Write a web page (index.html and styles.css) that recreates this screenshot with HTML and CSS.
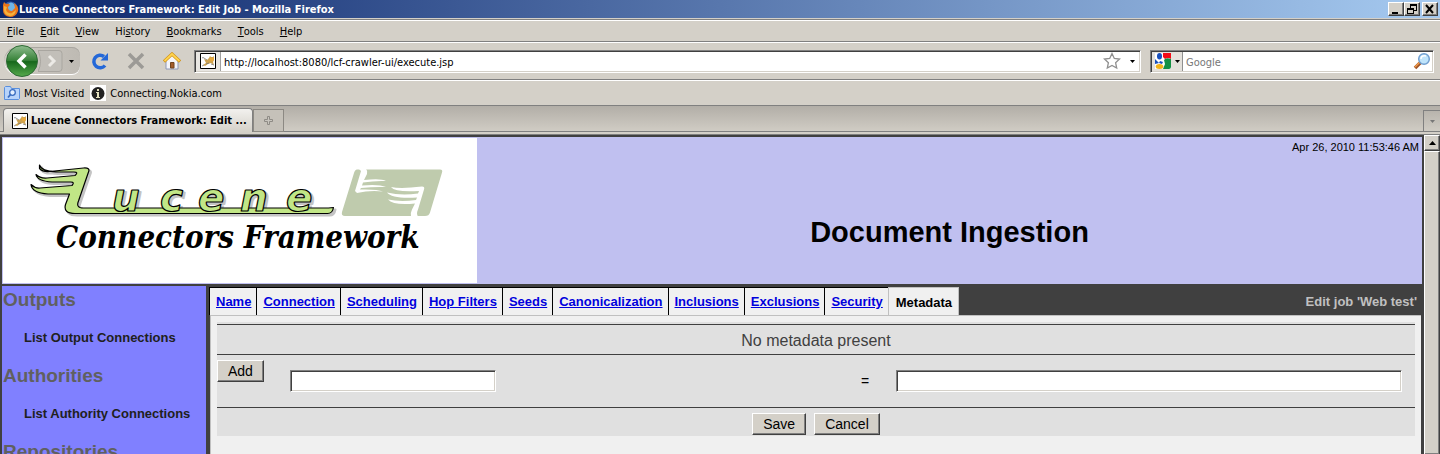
FILE: index.html
```html
<!DOCTYPE html>
<html lang="en">
<head>
<meta charset="utf-8">
<title>Lucene Connectors Framework: Edit Job</title>
<link rel="stylesheet" href="styles.css">
</head>
<body>
<svg class="defs" aria-hidden="true">
  <symbol id="cat" viewBox="0 0 16 16">
    <path d="M.5.5h15v15H.5z" fill="#fff" stroke="#000"/>
    <path d="M4 6l3 1 2-2 1-2 1 1h2l1-1v4l-1 2 1 3-3-2-3 1-3 2-2-1 3-2-1-2z" fill="#cda24f"/>
    <path d="M10 4l1 1h2l1-1v3l-2 1.500-2-1z" fill="#e8a93d"/>
    <path d="M2 5q1-1 2 0l3 2M2 13l2-1M6 11l3-1M11 11l3 1" fill="none" stroke="#777" stroke-width=".8"/>
  </symbol>
  <symbol id="caret" viewBox="0 0 5 3"><path d="M0 0h5L2.500 3z" fill="currentColor"/></symbol>
</svg>
<header class="browser">
  <div class="titlebar">
    <svg class="i17" viewBox="0 0 17 17"><circle cx="8.500" cy="8" r="7.500" fill="#315caa"/><path d="M6 3q3-3 6 0 2 2 1 5-1 3-4 3-4 0-4-4z" fill="#6fb4e8"/><path d="M1 4l1-3 2 2q3-1 4 1L6 6q0 4 4 4l3-3-1-5q5 3 4 8-2 6-8 6-7-1-7-7z" fill="#e8741b"/><path d="M2 5l3 1-1 3q2 4 6 3l4-3q-1 6-6 6-6-1-6-6z" fill="#f6b23b"/></svg>
    <span class="title">Lucene Connectors Framework: Edit Job - Mozilla Firefox</span>
    <div class="winbtns">
      <button class="wb" aria-label="Minimize"><svg viewBox="0 0 12 10"><path d="M2 8h6v2H2z"/></svg></button>
      <button class="wb" aria-label="Restore"><svg viewBox="0 0 12 10"><path d="M4 0h7v7H8v3H1V4h3zm1 2v2h3v2h2V2zM2 6v3h5V6z" fill-rule="evenodd"/></svg></button>
      <button class="wb close" aria-label="Close"><svg viewBox="0 0 12 10"><path d="M2 1l7 8M9 1L2 9" stroke="#000" stroke-width="2"/></svg></button>
    </div>
  </div>
  <nav class="menubar">
    <button><u>F</u>ile</button><button><u>E</u>dit</button><button><u>V</u>iew</button><button>Hi<u>s</u>tory</button><button><u>B</u>ookmarks</button><button><u>T</u>ools</button><button><u>H</u>elp</button>
  </nav>
  <div class="navbar">
    <div class="backfwd">
      <button aria-label="Back"><svg width="32" height="32" viewBox="0 0 32 32"><defs><linearGradient id="g" x2="0" y2="1"><stop offset="0" stop-color="#8fbd8f"/><stop offset=".48" stop-color="#378238"/><stop offset=".52" stop-color="#17681b"/><stop offset="1" stop-color="#55a94c"/></linearGradient></defs><circle cx="16" cy="16" r="15.500" fill="url(#g)" stroke="#2d6a34"/><path d="M19.500 9.500L13 16l6.500 6.500" fill="none" stroke="#fff" stroke-width="3.500"/></svg></button>
      <button class="fwd" aria-label="Forward"><svg width="25" height="22" viewBox="0 0 25 22"><path d="M0 .5h21q3 0 3 3v15q0 3-3 3H0q5-10 0-21z" fill="#c2bfb9" stroke="#a9a6a0"/><path d="M11 6l5 5-5 5" fill="none" stroke="#eceae6" stroke-width="3"/></svg></button>
      <button class="hist" aria-label="History"><svg class="car"><use href="#caret"/></svg></button>
    </div>
    <button class="tool" aria-label="Reload"><svg width="18" height="18" viewBox="0 0 18 18"><path d="M14 13.500A6.300 6.300 0 1 1 13 4.500" fill="none" stroke="#2468d8" stroke-width="3.500"/><path d="M17 1v7.500H9.500z" fill="#2468d8"/></svg></button>
    <button class="tool" aria-label="Stop"><svg width="18" height="18" viewBox="0 0 18 18"><path d="M2 2l14 14M16 2L2 16" stroke="#9c9a96" stroke-width="3.500"/></svg></button>
    <button class="tool" aria-label="Home"><svg width="18" height="18" viewBox="0 0 18 18"><path d="M3 9l6-6 6 6v8H3z" fill="#f5f5f8" stroke="#8d98b8"/><path d="M7.500 10.500h3.500V16H7.500z" fill="#a35c2a" stroke="#72451f"/><path d="M1 9.500L9 2l8 7.500" fill="none" stroke="#d19218" stroke-width="3.200"/><path d="M1.500 9L9 2l7.500 7" fill="none" stroke="#ffd44f" stroke-width="1.800"/></svg></button>
    <div class="field url">
      <span class="ident"><svg class="i16"><use href="#cat"/></svg></span>
      <input aria-label="Address" value="http://localhost:8080/lcf-crawler-ui/execute.jsp">
      <svg width="18" height="18" viewBox="0 0 18 18"><path d="M9 1.500l2.300 5 5.200.6-3.900 3.600 1.100 5.300L9 13.400 4.300 16l1.100-5.300L1.500 7.100l5.200-.6z" fill="#fff" stroke="#909090" stroke-width="1.300"/></svg>
      <button class="drop" aria-label="Show history"><svg class="car"><use href="#caret"/></svg></button>
    </div>
    <div class="field search">
      <button class="engine" aria-label="Search engine"><svg class="i16" viewBox="0 0 16 16"><path d="M0 0h16v16H0z" fill="#fff"/><path d="M8 0h8v6q-3-2-6 0L8 4z" fill="#f30b16"/><path d="M9 7q2-3 7-1v8q0 2-2 2H8l2-5z" fill="#149044"/><path d="M0 6l4 4-4 1z" fill="#1850bd"/><ellipse cx="4.500" cy="3.200" rx="2.500" ry="3.200" fill="#1850bd"/><path d="M5 8l3 1-1 2-3-1z" fill="#1850bd"/><ellipse cx="4.500" cy="13.500" rx="3.800" ry="2.500" fill="#f4b419"/></svg><svg class="car"><use href="#caret"/></svg></button>
      <input aria-label="Search" placeholder="Google">
      <button class="go" aria-label="Go"><svg width="18" height="18" viewBox="0 0 18 18"><path d="M8 10l-6 6" stroke="#a05428" stroke-width="3.500"/><path d="M7 10l-5 5" stroke="#f09a48" stroke-width="1.500"/><circle cx="11" cy="7" r="5.300" fill="#bfe4fb" stroke="#719fd0" stroke-width="1.500"/><path d="M8 7q0-4 5-3" stroke="#fff" stroke-width="1.500" fill="none"/></svg></button>
    </div>
  </div>
  <nav class="bookmarks">
    <a href="#"><svg class="i16" viewBox="0 0 16 16"><path d="M.5 2.500l1-1h5l1 2h8v10l-1 1H.5z" fill="#b7d3fa" stroke="#5a8fdc"/><circle cx="8.500" cy="7.500" r="2.800" fill="#e4f0ff" stroke="#396cc0" stroke-width="1.300"/><path d="M6.500 9.500L4 12.500" stroke="#396cc0" stroke-width="1.800"/></svg>Most Visited</a>
    <a href="#"><svg class="i16" viewBox="0 0 16 16"><path d="M0 0h16v16H0z" fill="#fff"/><circle cx="8" cy="8.500" r="6.500" fill="#222"/><path d="M7 4h2v2H7zM6 7h3v5h1v1H6v-1h1V8H6z" fill="#e4e1bf"/></svg>Connecting.Nokia.com</a>
  </nav>
  <div class="tabstrip">
    <button class="btab"><svg class="i16"><use href="#cat"/></svg>Lucene Connectors Framework: Edit ...</button>
    <button class="newtab" aria-label="New tab"><svg width="9" height="9" viewBox="0 0 9 9"><path d="M3.500.5h2v3h3v2h-3v3h-2v-3h-3v-2h3z" fill="#c8c5be" stroke="#8e8b85"/></svg></button>
    <button class="alltabs" aria-label="List all tabs"><svg class="car"><use href="#caret"/></svg></button>
  </div>
</header>
<div class="viewport">
  <div class="page">
    <header class="banner">
      <div class="logo">
        <svg width="474" height="145" viewBox="3 138 474 145" role="img" aria-label="Lucene Connectors Framework">
          <defs>
            <g id="mark" stroke-linejoin="round">
              <path d="M39.500 168.500q3 3.500 10 3l34-3.500q7-.5 5 4l-10 29q-3 7 5 7h245l5-.5q-1 6-6 6H75q-12 0-9.500-9l4-10.500H48q-16-1-17-9.500 4 4 9 3.500l32-2.500q3-3.500-1-3.500H52q-15-1-16-7.500 4 4 11 3.500l28-2.500q4-3.500-1-3.500H56q-15-1-16.500-7z"/>
              <g font-family="'DejaVu Sans'" font-style="italic" font-weight="bold" font-size="39"><text y="211"><tspan x="112">u</tspan><tspan x="160">c</tspan><tspan x="198">e</tspan><tspan x="240">n</tspan><tspan x="286">e</tspan></text></g>
            </g>
          </defs>
          <use href="#mark" x="2" y="2" fill="#c4c4c4" stroke="#c4c4c4" stroke-width="2"/>
          <use href="#mark" fill="#c1e686" stroke="#000" stroke-width="1.200"/>
          <text x="56" y="248" font-family="'DejaVu Serif Condensed','DejaVu Serif'" font-stretch="condensed" font-style="italic" font-weight="bold" font-size="31">Connectors Framework</text>
          <path d="M357 169.500h83q3 0 2 3l-12 40q-1 3.500-5 3.500h-80q-4 0-3-4l12-39q1-3.500 3-3.500z" fill="#bfcbad"/>
          <path d="M359 169h7q2 2 1 5l-3 6q17-2 22 1-11-.5-23 1.500l-1 3q17-1.500 24 1.500-12-.5-25 1l-1 1.500q17-.5 23 2-13-1.500-26 1.500l-2-2 6-20zM391 187q10 2 31-.5 3 0 2 3l-6 20q-2 4 0 7h-7q-1-3 1-7l3-6q-22 2-27-4 12 2.500 28 .5l1-2.500q-25 1.500-30-5 14 3.500 31 1l1-2.500q-24 1.500-28-4z" fill="#fff"/>
        </svg>
      </div>
      <div class="headline"><time>Apr 26, 2010 11:53:46 AM</time><h1>Document Ingestion</h1></div>
    </header>
    <div class="columns">
      <aside class="side">
        <h2>Outputs</h2><a href="#">List Output Connections</a>
        <h2>Authorities</h2><a href="#">List Authority Connections</a>
        <h2>Repositories</h2>
      </aside>
      <main class="main">
        <div class="tabs">
          <a href="#">Name</a><a href="#">Connection</a><a href="#">Scheduling</a><a href="#">Hop Filters</a><a href="#">Seeds</a><a href="#">Canonicalization</a><a href="#">Inclusions</a><a href="#">Exclusions</a><a href="#">Security</a><span class="current">Metadata</span>
          <span class="job">Edit job 'Web test'</span>
        </div>
        <form class="panel">
          <div class="sheet">
            <div class="row message">No metadata present</div>
            <div class="row entry">
              <button type="button">Add</button>
              <div><input class="short" aria-label="Metadata name"></div>
              <span class="eq">=</span>
              <div><input class="long" aria-label="Metadata value"></div>
            </div>
            <div class="row actions"><button type="button">Save</button><button type="button">Cancel</button></div>
          </div>
        </form>
      </main>
    </div>
  </div>
  <div class="scrollbar"><button class="up" aria-label="Scroll up"><svg width="7" height="4" viewBox="0 0 7 4"><path d="M0 4h7L3.500 0z"/></svg></button><div class="thumb"></div></div>
</div>
</body>
</html>
```
FILE: styles.css
```css
* { box-sizing: border-box; }
body {
  margin: 0;
  height: 100vh;
  display: flex;
  flex-direction: column;
  overflow: hidden;
  background: #d4d0c8;
  font-family: "Liberation Sans", Arial, sans-serif;
}
button, input { font: inherit; }
svg { flex: none; }
.defs { display: none; }
.browser { flex: none; font: 11px "DejaVu Sans Condensed", "DejaVu Sans", sans-serif; font-stretch: condensed; }
.browser button { border: 0; padding: 0; background: none; color: #000; display: flex; align-items: center; }
.i16 { width: 16px; height: 16px; }
.i17 { width: 17px; height: 17px; }
.car { width: 5px; height: 3px; }

.titlebar {
  height: 18px;
  display: flex;
  align-items: center;
  padding: 0 2px;
  background: linear-gradient(90deg, #0a246a, #a6caf0);
  color: #fff;
  font-weight: bold;
}
.title { flex: 1; }
.winbtns { display: flex; }
.browser .wb {
  width: 16px;
  height: 14px;
  justify-content: center;
  background: #d4d0c8;
  border: 1px solid;
  border-color: #fff #404040 #404040 #fff;
  box-shadow: inset -1px -1px #808080;
}
.wb svg { width: 12px; height: 10px; }
.browser .close { margin-left: 2px; }

.menubar, .navbar, .bookmarks { display: flex; align-items: center; border-bottom: 1px solid #808080; }
.menubar { height: 24px; padding: 3px 7px 0; gap: 16px; box-shadow: inset 0 1px #d4d0c8, inset 0 2px #808080, inset 0 3px #fff; }
.navbar { height: 38px; padding: 0 6px 0 4px; border-top: 1px solid #fff; }
.backfwd {
  display: flex;
  align-items: center;
  height: 28px;
  width: 76px;
  padding-left: 2px;
  border-radius: 14px 8px 8px 14px;
  background: linear-gradient(90deg, #d0ccc5, #bebab3);
  box-shadow: inset 0 1px #a9a6a0, inset 0 -1px #fff;
}
.browser .hist { margin-left: 6px; }
.browser .tool { margin-left: 18px; }
.browser .backfwd + .tool { margin-left: 11px; }
.field {
  display: flex;
  align-items: center;
  height: 23px;
  background: #fff;
  border: 1px solid;
  border-color: #808080 #fff #fff #808080;
  box-shadow: inset 1px 1px #404040, inset -1px -1px #d4d0c8;
}
.field input { flex: 1; min-width: 0; border: 0; outline: 0; background: none; padding: 2px 3px 0; }
.field input::placeholder { color: #777; opacity: 1; }
.url { flex: 1; margin-left: 13px; }
.ident { width: 25px; height: 19px; margin-left: 1px; display: flex; align-items: center; justify-content: center; background: #e8e6e2; border-right: 1px solid #a0a0a0; }
.browser .drop { margin: 0 5px 0 9px; }
.search { width: 284px; margin-left: 9px; }
.browser .engine { width: 31px; height: 19px; margin-left: 1px; padding-left: 3px; gap: 4px; background: #e4e1dc; border-right: 1px solid #909090; }
.browser .go { margin-right: 2px; }
.bookmarks { height: 26px; padding: 0 4px; gap: 6px; border-top: 1px solid #fff; }
.bookmarks a { display: flex; align-items: center; gap: 4px; color: #000; text-decoration: none; }
.tabstrip {
  height: 29px;
  display: flex;
  align-items: flex-end;
  padding: 0 0 3px 3px;
  background: linear-gradient(#b2aea7, #d0ccc4 25px, #808080 25px, #808080 26px, #d4d0c8 26px, #d4d0c8 28px, #808080 28px);
}
.browser .btab {
  width: 250px;
  height: 24px;
  gap: 3px;
  padding-left: 8px;
  background: linear-gradient(#f2f1ee, #d4d0c8);
  border: 1px solid #808080;
  border-bottom: 0;
  border-radius: 4px 4px 0 0;
  font-weight: bold;
  white-space: nowrap;
}
.browser .newtab { width: 31px; height: 23px; justify-content: center; background: #c5c1b9; border: 1px solid #8c8983; }
.browser .alltabs { width: 17px; height: 22px; margin-left: auto; padding-left: 6px; border: 1px solid #808080; border-width: 1px 0 0 1px; color: #777; }

.viewport { flex: 1; min-height: 0; display: flex; }
.page { flex: 1; min-width: 0; display: flex; flex-direction: column; overflow: hidden; background: #404040; padding: 2px 2px 0; }
.banner { flex: none; display: flex; background: #c0c0f0; }
.logo { padding: 1px 0 1px 1px; }
.logo svg { display: block; background: #fff; }
.headline { flex: 1; display: flex; flex-direction: column; padding: 4px 3px; text-align: center; }
.headline time { font-size: 11px; line-height: 13px; text-align: right; }
.headline h1 { margin: 60px 0 0; font-size: 29px; line-height: 36px; }
.columns { flex: 1; display: flex; margin-top: 2px; }
.side { width: 204px; background: #8080ff; padding-left: 1px; font-weight: bold; }
.side h2 { margin: 0; font-size: 19px; line-height: 28px; color: #606060; }
.side a { display: block; padding: 16px 0; padding-left: 21px; font-size: 13px; line-height: 16px; color: #202020; text-decoration: none; }
.main { flex: 1; min-width: 0; display: flex; flex-direction: column; padding-left: 3px; }
.tabs { height: 29px; display: flex; align-items: stretch; padding-top: 1px; font-size: 13px; font-weight: bold; line-height: 30px; white-space: nowrap; }
.tabs a { flex: none; padding: 0 5px 0 6px; background: #f0f0f0; color: #00d; border: 1px solid #000; border-width: 1px 0 0 1px; line-height: 28px; }
.current { padding: 0 6px 0 7px; background: #f0f0f0; border: 1px solid #c0c0c0; border-width: 1px 1px 0; }
.job { margin-left: auto; padding-right: 5px; color: #c0c0c0; }
.panel { flex: 1; margin: 0 1px 0 1px; padding: 6px 6px; background: #f0f0f0; border: 1px solid #c0c0c0; border-width: 1px 0 0 1px; }
.sheet { background: #e0e0e0; padding-top: 2px; }
.row { border-top: 1px solid #404040; }
.row button {
  height: 22px;
  padding: 0 10px;
  background: #d4d0c8;
  color: #000;
  border: 1px solid;
  border-color: #fff #404040 #404040 #fff;
  box-shadow: inset -1px -1px #808080;
  font-size: 14px;
}
.row input { height: 22px; background: #fff; border: 1px solid; border-color: #808080 #fff #fff #808080; box-shadow: inset 1px 1px #404040, inset -1px -1px #d4d0c8; }
.message { height: 30px; line-height: 32px; text-align: center; font-size: 16px; color: #404040; }
.entry { display: grid; grid-template-columns: 73px 1fr 53px 519px; height: 53px; padding-top: 5px; align-items: start; }
.entry button { justify-self: start; }
.entry div, .eq { padding-top: 10px; }
.eq { font-size: 14px; padding-left: 18px; line-height: 22px; }
.short { width: 206px; }
.long { width: 506px; }
.actions { height: 29px; display: flex; justify-content: center; gap: 8px; padding-top: 5px; }
.scrollbar { width: 16px; display: flex; flex-direction: column; background: #d4d0c8; }
.up { height: 16px; padding: 0; display: flex; align-items: center; justify-content: center; }
.up, .thumb { background: #d4d0c8; border: 1px solid; border-color: #fff #404040 #404040 #fff; box-shadow: inset -1px -1px #808080; }
.thumb { flex: 1; border-bottom: 0; }
```
